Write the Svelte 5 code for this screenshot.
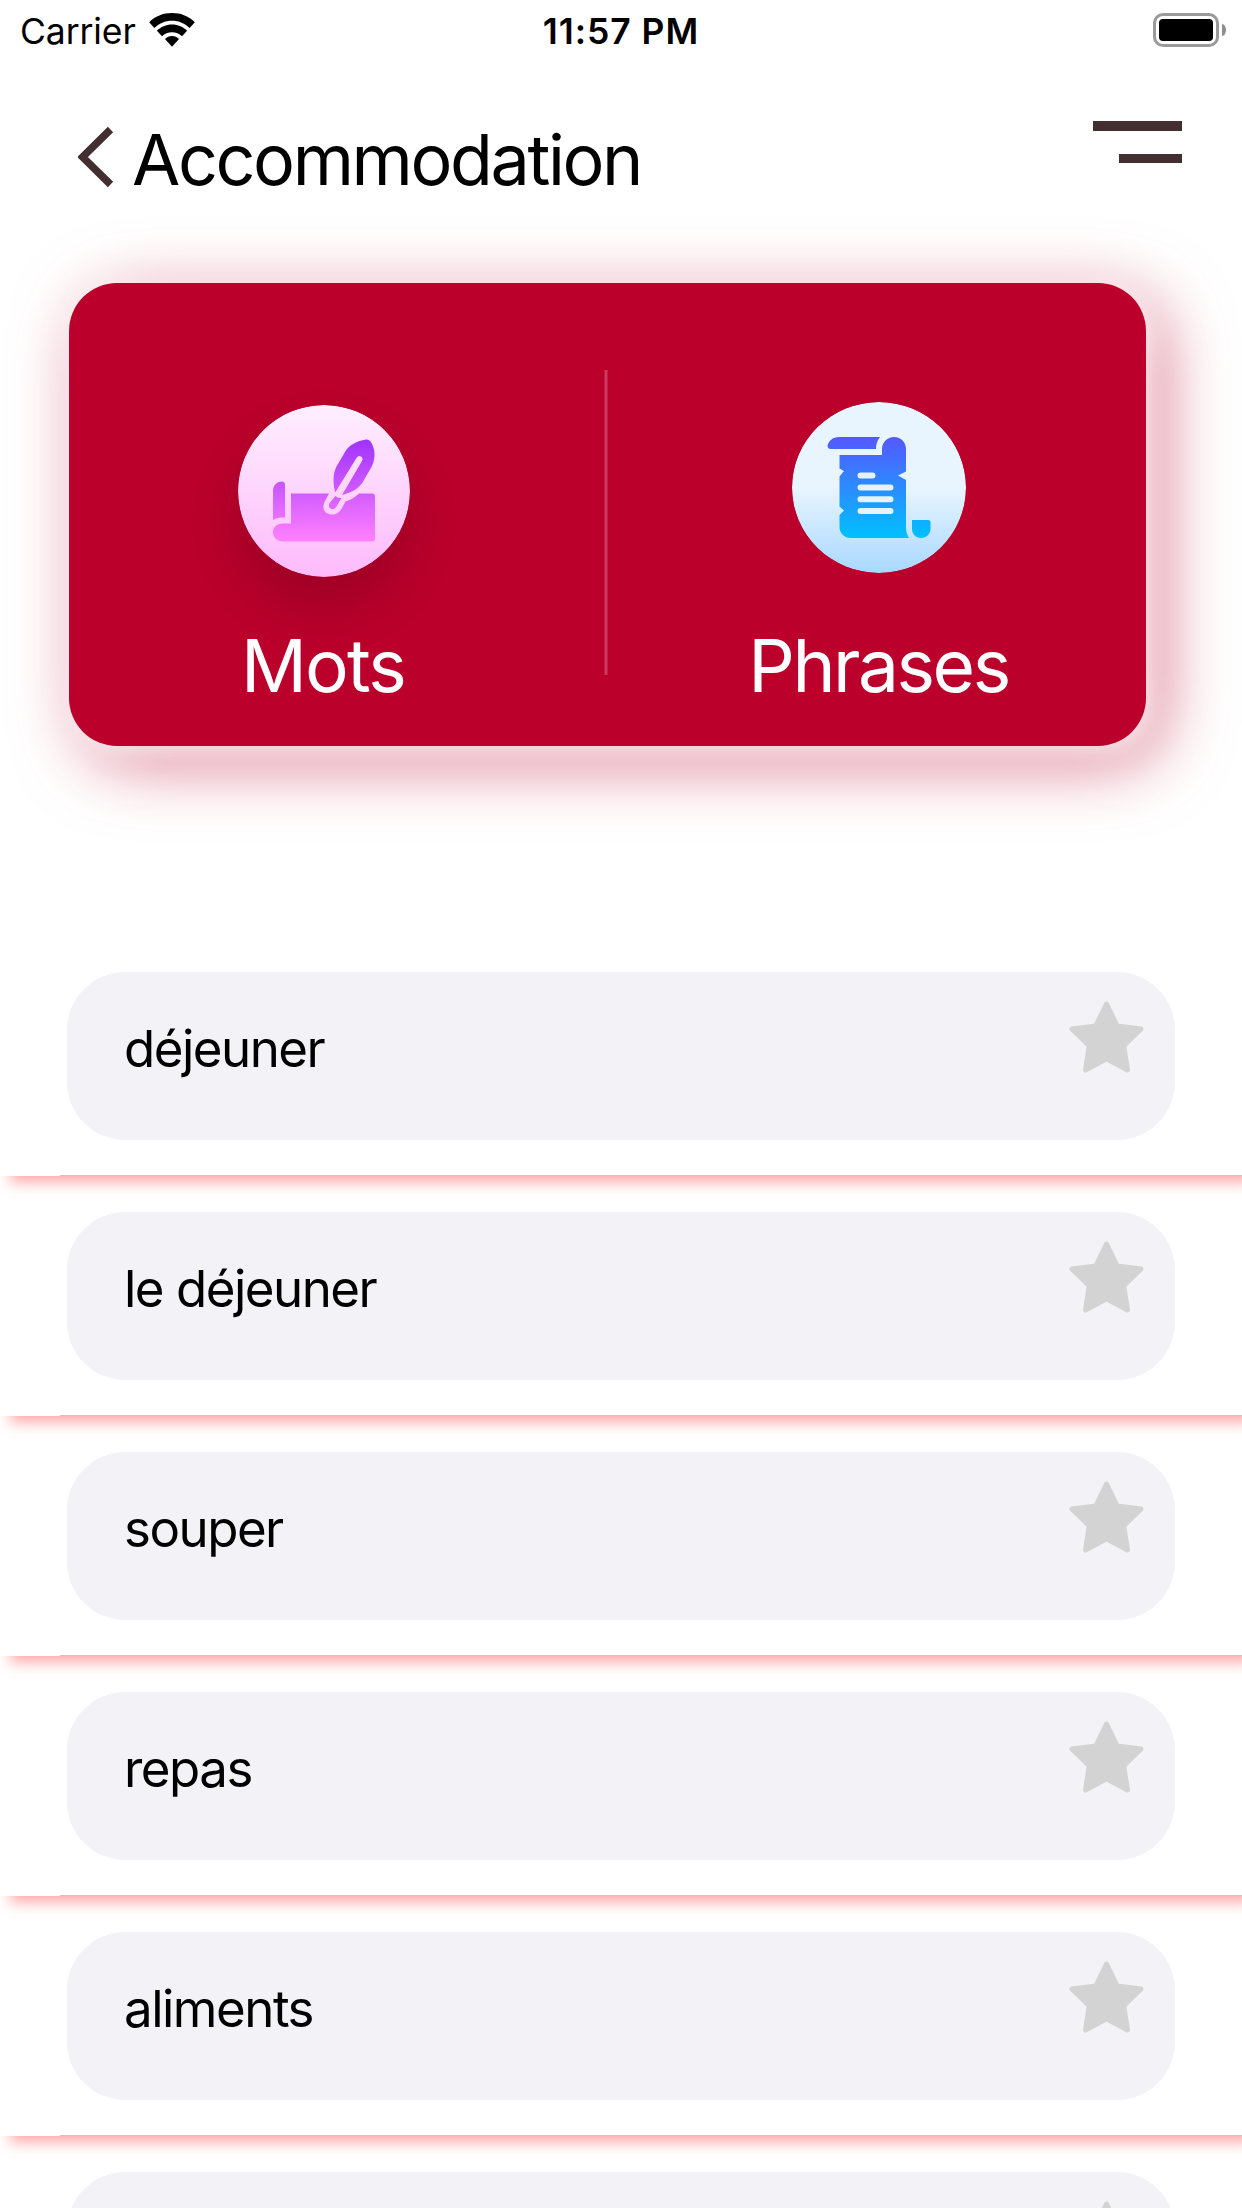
<script>
  const words = ['déjeuner', 'le déjeuner', 'souper', 'repas', 'aliments', ''];
</script>

<div class="screen">
  <div class="status">
    <div class="carrier">
      <span class="carrier-name">Carrier</span>
      <svg class="wifi" viewBox="0 0 46 34">
        <path d="M23 0C14 0 6 3.3.2 9.2L5.3 15C10 10.400 16 7.700 23 7.700S36 10.400 40.700 15L45.800 9.200C40 3.300 32 0 23 0Z" />
        <path d="M23 11.500C17 11.500 11.800 13.900 7.900 17.700L13 23.300C15.700 20.700 19.100 19.300 23 19.300S30.300 20.700 33 23.300L38.100 17.700C34.200 13.900 29 11.500 23 11.500Z" />
        <path d="M23 23C20.200 23 17.800 24.100 16 26L23 33.700L30 26C28.200 24.100 25.800 23 23 23Z" />
      </svg>
    </div>
    <div class="time">11:57 PM</div>
    <div class="power">
      <div class="battery"><div class="charge"></div></div>
      <div class="nub"></div>
    </div>
  </div>

  <header>
    <svg class="back" viewBox="0 0 36 62">
      <path d="M32.500 3.500L4.500 31L32.500 58.500" />
    </svg>
    <h1>Accommodation</h1>
    <div class="menu"><i></i><i></i></div>
  </header>

  <section class="card">
    <div class="tab words">
      <svg class="badge pink" viewBox="0 0 172 172">
        <defs>
          <linearGradient id="pinkDisc" x1="0" y1="0" x2="0" y2="1">
            <stop offset="0" stop-color="#ffefff" />
            <stop offset="1" stop-color="#fdbafb" />
          </linearGradient>
          <linearGradient id="violet" gradientUnits="userSpaceOnUse" x1="0" y1="35" x2="0" y2="136">
            <stop offset="0" stop-color="#a033ff" />
            <stop offset="1" stop-color="#ff80ff" />
          </linearGradient>
        </defs>
        <circle cx="86" cy="86" r="86" fill="url(#pinkDisc)" />
        <g fill="url(#violet)">
          <path d="M35 115V86C35 80.500 39 76.500 44 76.500C46 76.500 47 78 47 80V112.500H43C40 112.500 37.500 113.400 35 115Z" />
          <path d="M53 88.500H91L87 96C83 104 87 109.500 94 109.500C99 109.500 102 107 105 101L107.500 96.500C112 95 117 92.500 121 88.500H134Q137 88.500 137 91.500V133Q137 136.500 134 136.500H45C39 136.500 35 132 35 127.500C35 122 39 118.500 45 118.500H53Z" />
          <path d="M97 87C94 73 96 65 100 59L107 47C111 40 119 36 128 34.500Q131 34 133 37C137 44 138 52 134 61L126 75C121 84 114 87.500 104 90L124 56Q125.500 53 123 51.500Q120.500 50 118.500 53L97.500 87Z" />
          <path d="M97.500 91Q99.500 93.500 103.500 93L98.500 101.500Q96 105.500 92.500 103.500Q89.500 101.500 92 97.500Z" />
        </g>
      </svg>
      <span class="label">Mots</span>
    </div>
    <div class="rule"></div>
    <div class="tab phrases">
      <svg class="badge blue" viewBox="0 0 174 171" preserveAspectRatio="none">
        <defs>
          <linearGradient id="blueDisc" x1="0" y1="0" x2="0" y2="1">
            <stop offset="0.500" stop-color="#e8f5ff" />
            <stop offset="1" stop-color="#a8d8ff" />
          </linearGradient>
          <linearGradient id="azure" gradientUnits="userSpaceOnUse" x1="0" y1="35" x2="0" y2="136">
            <stop offset="0" stop-color="#5558ff" />
            <stop offset="1" stop-color="#00c0ff" />
          </linearGradient>
        </defs>
        <ellipse cx="87" cy="85.500" rx="87" ry="85.500" fill="url(#blueDisc)" />
        <g fill="url(#azure)">
          <path d="M47 35H88Q84 40 84 47H39Q35.500 47 35.500 43.500C37 38.500 41 35 47 35Z" />
          <path d="M47.500 53H90V47C90 40 95.500 35 102 35C109 35 114 40.500 114 47V69.500L106 73.500L114 78V125C114 129.500 115 132.500 117 136H59C52 136 47.500 131 47.500 125V113L52 108.500L47.500 104.500V74.500L52 69L47.500 66.500Z" />
          <path d="M120 118H136Q138.500 118 138.500 120.500V127C138.500 132 134 136 129 136S120 132 120 127Z" />
        </g>
        <g stroke="#e4f3ff" stroke-width="6" stroke-linecap="round">
          <path d="M68.500 73.500H80.500M68.500 85.500H98.500M68.500 97.300H98.500M68.500 109H98.500" />
        </g>
      </svg>
      <span class="label">Phrases</span>
    </div>
  </section>

  <main>
    {#each words as word, i}
      <div class="row" style:z-index={words.length - i}>
        <div class="pill">
          <span class="word">{word}</span>
          <svg class="star" viewBox="0 0 75 72">
            <path d="M37.500 3L48.200 25L72 28L54.700 44.800L58.500 69L37.500 57.800L16.500 69L20.300 44.800L3 28L26.800 25Z" />
          </svg>
        </div>
      </div>
    {/each}
  </main>
</div>

<style>
  :global(body) {
    margin: 0;
    background: #fff;
    overflow: hidden;
  }
  .screen {
    width: 1242px;
    height: 2208px;
    overflow: hidden;
    background: #fff;
    color: #000;
    font-family: Inter, 'Liberation Sans', sans-serif;
    display: flex;
    flex-direction: column;
  }
  .status {
    height: 60px;
    flex: none;
    display: grid;
    grid-template-columns: 1fr auto 1fr;
    box-sizing: border-box;
    padding: 0 16px 0 20px;
  }
  .carrier {
    display: flex;
    align-items: flex-start;
  }
  .carrier-name {
    width: 129px;
    font-size: 35.500px;
    line-height: 63px;
    letter-spacing: -0.100px;
  }
  .wifi {
    width: 46px;
    height: 34px;
    margin-top: 13px;
  }
  .time {
    margin-left: -4px;
    font-size: 35.500px;
    font-weight: 600;
    line-height: 63px;
    letter-spacing: 0.950px;
  }
  .power {
    display: flex;
    justify-content: flex-end;
    padding-top: 13px;
    gap: 3px;
  }
  .battery {
    box-sizing: border-box;
    width: 66px;
    height: 34px;
    border: 3px solid #9a9a9a;
    border-radius: 10px;
    padding: 3px;
  }
  .charge {
    height: 22px;
    border-radius: 4px;
    background: #000;
  }
  .nub {
    width: 4px;
    height: 12px;
    margin-top: 11px;
    border-radius: 0 4px 4px 0 / 0 6px 6px 0;
    background: #8e8e8e;
  }
  header {
    height: 223px;
    flex: none;
    box-sizing: border-box;
    padding: 60px 60px 0 78px;
    display: flex;
    align-items: flex-start;
  }
  .back {
    width: 36px;
    height: 62px;
    margin-top: 6px;
    fill: none;
    stroke: #432e30;
    stroke-width: 7.500;
  }
  h1 {
    margin: 0 0 0 18px;
    font-size: 70px;
    font-weight: 400;
    line-height: 79px;
    letter-spacing: -2.400px;
    flex: 1;
  }
  .menu {
    display: flex;
    flex-direction: column;
    align-items: flex-end;
    gap: 24px;
    padding-top: 1px;
  }
  .menu i {
    width: 89px;
    height: 9px;
    background: #432e30;
  }
  .menu i:first-child {
    height: 10px;
    margin-bottom: -1px;
  }
  .menu i + i {
    width: 63px;
  }
  .card {
    flex: none;
    width: 1077px;
    height: 463px;
    margin-left: 69px;
    border-radius: 48px;
    background: #bb002c;
    display: flex;
    box-shadow:
      4px 4px 28px rgba(255, 255, 255, 0.950),
      15px 15px 68px rgba(187, 0, 44, 0.560);
  }
  .tab {
    display: flex;
    flex-direction: column;
    align-items: center;
  }
  .words {
    box-sizing: border-box;
    width: 510px;
    padding-top: 122px;
  }
  .phrases {
    flex: 1;
    padding: 119px 0 0 3px;
  }
  .badge {
    display: block;
    width: 172px;
    height: 172px;
    border-radius: 50%;
  }
  .pink {
    box-shadow: 0 30px 60px rgba(0, 0, 0, 0.170);
  }
  .blue {
    width: 174px;
    height: 171px;
  }
  .label {
    color: #fff;
    font-size: 73px;
    line-height: 88px;
    margin: 45px 2px 0 0;
    letter-spacing: -1.900px;
  }
  .phrases .label {
    margin: 49px 0 0;
    letter-spacing: -2.500px;
  }
  .rule {
    width: 4px;
    height: 305px;
    margin: 87px 0 0 25px;
    background: linear-gradient(90deg, #c51d46 1px, #cc3a5d 1px 3px, #c51d46 3px);
  }
  main {
    flex: 1;
    min-height: 0;
    margin-top: 190px;
    overflow: hidden;
  }
  .row {
    position: relative;
    height: 240px;
    box-sizing: border-box;
    padding: 36px 67px;
    background: linear-gradient(90deg, #fff 60px, #c6c6c8 60px) bottom / 100% 1px no-repeat #fff;
    box-shadow: 10px 6px 14px rgba(255, 0, 0, 0.360);
  }
  .pill {
    height: 168px;
    border-radius: 58px;
    background: #f2f2f7;
    display: flex;
    justify-content: space-between;
    box-sizing: border-box;
    padding: 29px 31.500px 0 57px;
  }
  .word {
    font-size: 51px;
    line-height: 96px;
    letter-spacing: -1.500px;
  }
  .star {
    width: 75px;
    height: 72px;
    fill: #d3d3d3;
    stroke: #d3d3d3;
    stroke-width: 5;
    stroke-linejoin: round;
  }
</style>
